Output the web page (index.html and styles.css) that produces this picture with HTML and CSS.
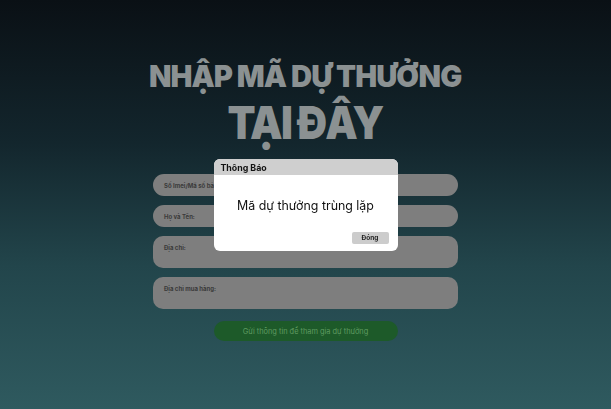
FILE: index.html
```html
<!DOCTYPE html>
<html lang="vi">

<head>
	<meta charset="UTF-8">
	<title>Nhập mã dự thưởng</title>
	<link rel="stylesheet" href="styles.css">
</head>

<body>
	<div class="page">
		<h1 class="title">
			<span class="titleTop">NHẬP MÃ DỰ THƯỞNG</span>
			<span class="titleBottom">TẠI ĐÂY</span>
		</h1>
		<form class="entryForm" onsubmit="return false">
			<div class="field"><span class="fieldLabel">Số Imei/Mã số bảo hành:</span></div>
			<div class="field"><span class="fieldLabel">Họ và Tên:</span></div>
			<div class="field tall"><span class="fieldLabel">Địa chỉ:</span></div>
			<div class="field tall"><span class="fieldLabel">Địa chỉ mua hàng:</span></div>
			<button class="sendButton">Gửi thông tin để tham gia dự thưởng</button>
		</form>
	</div>
	<div class="overlay">
		<div class="dialog">
			<div class="dialogHead">Thông Báo</div>
			<div class="dialogBody">Mã dự thưởng trùng lặp</div>
			<div class="dialogFoot">
				<a class="closeButton" href="#">Đóng</a>
			</div>
		</div>
	</div>
</body>

</html>
```

FILE: styles.css
```css
html, body {
	margin: 0;
	height: 100%;
}
body {
	font-family: Inter, "Noto Sans", sans-serif;
	background: linear-gradient(to bottom, #0a1015 0%, #13262d 35%, #22454b 65%, #2f5a5f 100%);
	overflow: hidden;
}
.page {
	display: flex;
	flex-direction: column;
	align-items: center;
	padding-top: 58px;
}
.title {
	margin: 0;
	display: flex;
	flex-direction: column;
	align-items: center;
	color: #8b9192;
	font-weight: 900;
}
.titleTop {
	font-size: 30px;
	line-height: 36px;
	letter-spacing: -1px;
	transform: scaleX(0.975);
}
.titleBottom {
	font-size: 46px;
	line-height: 56px;
	letter-spacing: -2px;
	transform: scaleX(0.89);
}
.entryForm {
	width: 305px;
	margin-top: 24px;
	display: flex;
	flex-direction: column;
	align-items: center;
	gap: 9px;
}
.field {
	width: 100%;
	box-sizing: border-box;
	height: 22px;
	border-radius: 11px;
	background: #7e7e7e;
	padding: 0 11px;
	display: flex;
	align-items: center;
}
.field.tall {
	height: 32px;
	border-radius: 10px;
	align-items: flex-start;
	padding-top: 8px;
}
.fieldLabel {
	font-size: 6px;
	font-weight: 700;
	color: #3a3a3a;
}
.sendButton {
	margin-top: 3px;
	width: 184px;
	height: 20px;
	border: none;
	border-radius: 10px;
	background: #1d5a29;
	color: #5f9a61;
	font-family: Inter, "Noto Sans", sans-serif;
	font-size: 7.4px;
}
.overlay {
	position: fixed;
	top: 0;
	left: 0;
	right: 0;
	bottom: 0;
	display: flex;
	align-items: center;
	justify-content: center;
}
.dialog {
	width: 184px;
	height: 92px;
	background: #ffffff;
	border-radius: 6px;
	overflow: hidden;
	display: flex;
	flex-direction: column;
}
.dialogHead {
	height: 16px;
	background: #cfcfcf;
	padding-left: 7px;
	font-size: 8.8px;
	font-weight: 700;
	line-height: 17px;
	color: #111;
}
.dialogBody {
	flex: 1;
	display: flex;
	align-items: center;
	justify-content: center;
	font-size: 12.4px;
	color: #111;
	padding-top: 4px;
}
.dialogFoot {
	display: flex;
	justify-content: flex-end;
	padding: 0 9px 7px 0;
}
.closeButton {
	width: 37px;
	height: 12px;
	background: #cccccc;
	border-radius: 2px;
	font-size: 6.5px;
	font-weight: 700;
	line-height: 12px;
	text-align: center;
	color: #222;
	text-decoration: none;
}
```
